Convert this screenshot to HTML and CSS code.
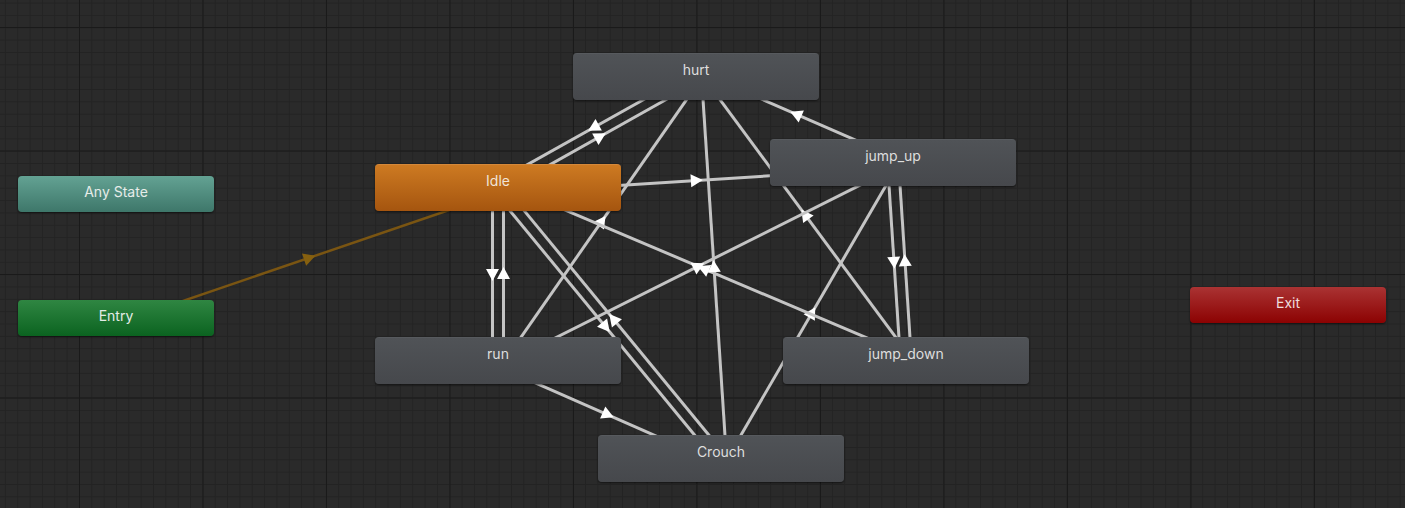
FILE: index.html
```html
<!DOCTYPE html>
<html>
<head>
<meta charset="utf-8">
<link rel="stylesheet" href="styles.css">
</head>
<body>
<div class="canvas" id="canvas">
  <svg class="links" id="links" width="1405" height="508" viewBox="0 0 1405 508"></svg>
  <div class="node small any" id="any" style="left:18px;top:176px">Any State</div>
  <div class="node small entry" id="entry" style="left:18px;top:300px">Entry</div>
  <div class="node small exit" id="exit" style="left:1190px;top:287px">Exit</div>
  <div class="node state" id="hurt" style="left:573px;top:53px">hurt</div>
  <div class="node state idle" id="idle" style="left:375px;top:164px">Idle</div>
  <div class="node state" id="jump_up" style="left:770px;top:139px">jump_up</div>
  <div class="node state" id="run" style="left:375px;top:337px">run</div>
  <div class="node state" id="jump_down" style="left:783px;top:337px">jump_down</div>
  <div class="node state" id="crouch" style="left:598px;top:435px">Crouch</div>
</div>
<script src="script.js"></script>
</body>
</html>
```
FILE: styles.css
```css
html, body {
  margin: 0;
  padding: 0;
  background: #282828;
}
.canvas {
  position: relative;
  width: 1405px;
  height: 508px;
  overflow: hidden;
  background-color: #2a2a2a;
  background-image:
    linear-gradient(to right, #1a1a1a 1px, transparent 1px),
    linear-gradient(to bottom, #1a1a1a 1px, transparent 1px),
    linear-gradient(to right, #232323 1px, transparent 1px),
    linear-gradient(to bottom, #232323 1px, transparent 1px);
  background-size: 123.5px 123.5px, 123.5px 123.5px, 12.35px 12.35px, 12.35px 12.35px;
  background-position: 79px 0, 0 27px, 4.9px 0, 0 2.6px;
}
.links {
  position: absolute;
  left: 0;
  top: 0;
}
.node {
  position: absolute;
  box-sizing: border-box;
  border-radius: 4px;
  font-family: Inter, "Noto Sans", "Liberation Sans", sans-serif;
  font-size: 14px;
  line-height: 18px;
  padding-top: 7px;
  text-align: center;
  color: #dedede;
  box-shadow: 0 1px 2px rgba(0, 0, 0, 0.55);
}
.small {
  width: 196px;
  height: 36px;
}
.state {
  width: 246px;
  height: 47px;
  background: linear-gradient(to bottom, #505357, #46484c);
  border-top: 1px solid #575a5e;
}
.any {
  background: linear-gradient(to bottom, #63a293, #3e776a);
  color: #e6ece9;
}
.entry {
  background: linear-gradient(to bottom, #2f8642, #0b6320);
  color: #e4ece6;
}
.exit {
  background: linear-gradient(to bottom, #aa3333, #8c0202);
  color: #eedddd;
}
.idle {
  background: linear-gradient(to bottom, #cd7a22, #a5550f);
  border-top: 1px solid #d4883a;
  color: #f0e4d8;
}
```
FILE: script.js
```js
(function () {
  var svg = document.getElementById('links');
  var NS = 'http://www.w3.org/2000/svg';
  function center(id) {
    var el = document.getElementById(id);
    return { x: el.offsetLeft + el.offsetWidth / 2, y: el.offsetTop + el.offsetHeight / 2 };
  }
  var transitions = [
    ['entry', 'idle', 'entry'],
    ['idle', 'hurt'], ['hurt', 'idle'],
    ['idle', 'jump_up'],
    ['jump_up', 'hurt'],
    ['jump_down', 'hurt'],
    ['run', 'hurt'],
    ['idle', 'run'], ['run', 'idle'],
    ['idle', 'crouch'], ['crouch', 'idle'],
    ['run', 'crouch'],
    ['crouch', 'jump_up'],
    ['jump_up', 'jump_down'], ['jump_down', 'jump_up'],
    ['jump_down', 'idle'],
    ['run', 'jump_up'],
    ['crouch', 'hurt']
  ];
  var OFF = 5.5;
  transitions.forEach(function (t) {
    var a = center(t[0]), b = center(t[1]);
    var dx = b.x - a.x, dy = b.y - a.y;
    var len = Math.sqrt(dx * dx + dy * dy);
    var ux = dx / len, uy = dy / len;
    var px = -uy, py = ux;
    var ax = a.x + px * OFF, ay = a.y + py * OFF;
    var bx = b.x + px * OFF, by = b.y + py * OFF;
    var isEntry = t[2] === 'entry';
    var line = document.createElementNS(NS, 'line');
    line.setAttribute('x1', ax); line.setAttribute('y1', ay);
    line.setAttribute('x2', bx); line.setAttribute('y2', by);
    line.setAttribute('stroke', isEntry ? '#7a5512' : '#c4c4c4');
    line.setAttribute('stroke-width', isEntry ? '2.5' : '3');
    svg.appendChild(line);
    var mx = (ax + bx) / 2, my = (ay + by) / 2;
    var tip = 7, back = 5, half = 6.5;
    var pts = [
      [mx + ux * tip, my + uy * tip],
      [mx - ux * back + px * half, my - uy * back + py * half],
      [mx - ux * back - px * half, my - uy * back - py * half]
    ];
    var poly = document.createElementNS(NS, 'polygon');
    poly.setAttribute('points', pts.map(function (p) { return p[0].toFixed(2) + ',' + p[1].toFixed(2); }).join(' '));
    poly.setAttribute('fill', isEntry ? '#86600f' : '#ffffff');
    svg.appendChild(poly);
  });
})();
```
